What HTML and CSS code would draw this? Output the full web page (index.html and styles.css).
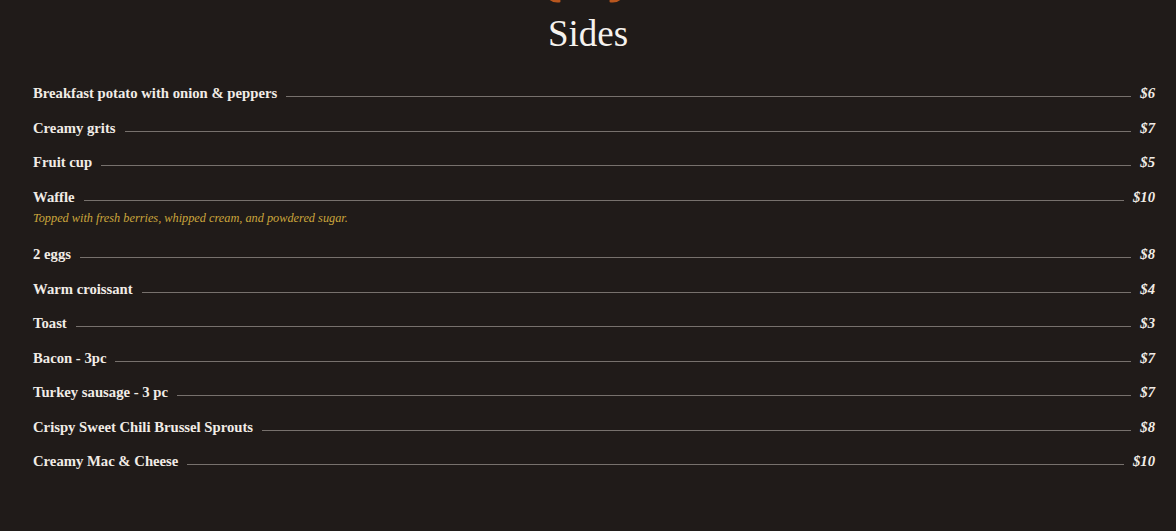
FILE: index.html
```html
<!DOCTYPE html>
<html>
<head>
<meta charset="utf-8">
<link rel="stylesheet" href="styles.css">
</head>
<body>
<section class="menu">
  <div class="ornament">
    <svg width="90" height="6" viewBox="0 0 90 6">
      <path d="M4 -6 Q8 2 16 1" stroke="#b8561e" stroke-width="3" fill="none" stroke-linecap="round"/>
      <path d="M68 1 Q76 2 80 -6" stroke="#b8561e" stroke-width="3" fill="none" stroke-linecap="round"/>
    </svg>
  </div>
  <h2 class="title">Sides</h2>
  <ul class="items">
    <li class="item"><div class="row"><span class="name">Breakfast potato with onion &amp; peppers</span><span class="leader"></span><span class="price">$6</span></div></li>
    <li class="item"><div class="row"><span class="name">Creamy grits</span><span class="leader"></span><span class="price">$7</span></div></li>
    <li class="item"><div class="row"><span class="name">Fruit cup</span><span class="leader"></span><span class="price">$5</span></div></li>
    <li class="item"><div class="row"><span class="name">Waffle</span><span class="leader"></span><span class="price">$10</span></div><p class="desc">Topped with fresh berries, whipped cream, and powdered sugar.</p></li>
    <li class="item"><div class="row"><span class="name">2 eggs</span><span class="leader"></span><span class="price">$8</span></div></li>
    <li class="item"><div class="row"><span class="name">Warm croissant</span><span class="leader"></span><span class="price">$4</span></div></li>
    <li class="item"><div class="row"><span class="name">Toast</span><span class="leader"></span><span class="price">$3</span></div></li>
    <li class="item"><div class="row"><span class="name">Bacon - 3pc</span><span class="leader"></span><span class="price">$7</span></div></li>
    <li class="item"><div class="row"><span class="name">Turkey sausage - 3 pc</span><span class="leader"></span><span class="price">$7</span></div></li>
    <li class="item"><div class="row"><span class="name">Crispy Sweet Chili Brussel Sprouts</span><span class="leader"></span><span class="price">$8</span></div></li>
    <li class="item"><div class="row"><span class="name">Creamy Mac &amp; Cheese</span><span class="leader"></span><span class="price">$10</span></div></li>
  </ul>
</section>
</body>
</html>
```
FILE: styles.css
```css
html, body {
  margin: 0;
  padding: 0;
  background: #201b19;
  height: 100%;
  overflow: hidden;
}
.menu {
  font-family: "Liberation Serif", "Times New Roman", serif;
  color: #f1ece6;
  padding: 0 21px 0 33px;
}
.ornament {
  display: flex;
  justify-content: center;
  height: 6px;
  margin-left: -12px;
}
.ornament svg {
  display: block;
}
.title {
  margin: 6px 0 0 0;
  text-align: center;
  font-weight: normal;
  font-size: 37px;
  line-height: 44px;
  margin-left: -12px;
  color: #f6f2ee;
}
.items {
  list-style: none;
  margin: 27px 0 0 0;
  padding: 0;
}
.item {
  margin: 0 0 14.5px 0;
}
.row {
  display: flex;
  align-items: flex-end;
  height: 20px;
  line-height: 20px;
}
.name {
  font-weight: bold;
  font-size: 14.7px;
  white-space: nowrap;
}
.leader {
  flex: 1;
  border-bottom: 1px solid #77716d;
  margin: 0 9px 6px 9px;
}
.price {
  font-weight: bold;
  font-style: italic;
  font-size: 14.7px;
  white-space: nowrap;
}
.desc {
  margin: 2px 0 0 0;
  padding-bottom: 2px;
  font-style: italic;
  font-size: 12.3px;
  line-height: 19px;
  color: #cba63c;
}
```
